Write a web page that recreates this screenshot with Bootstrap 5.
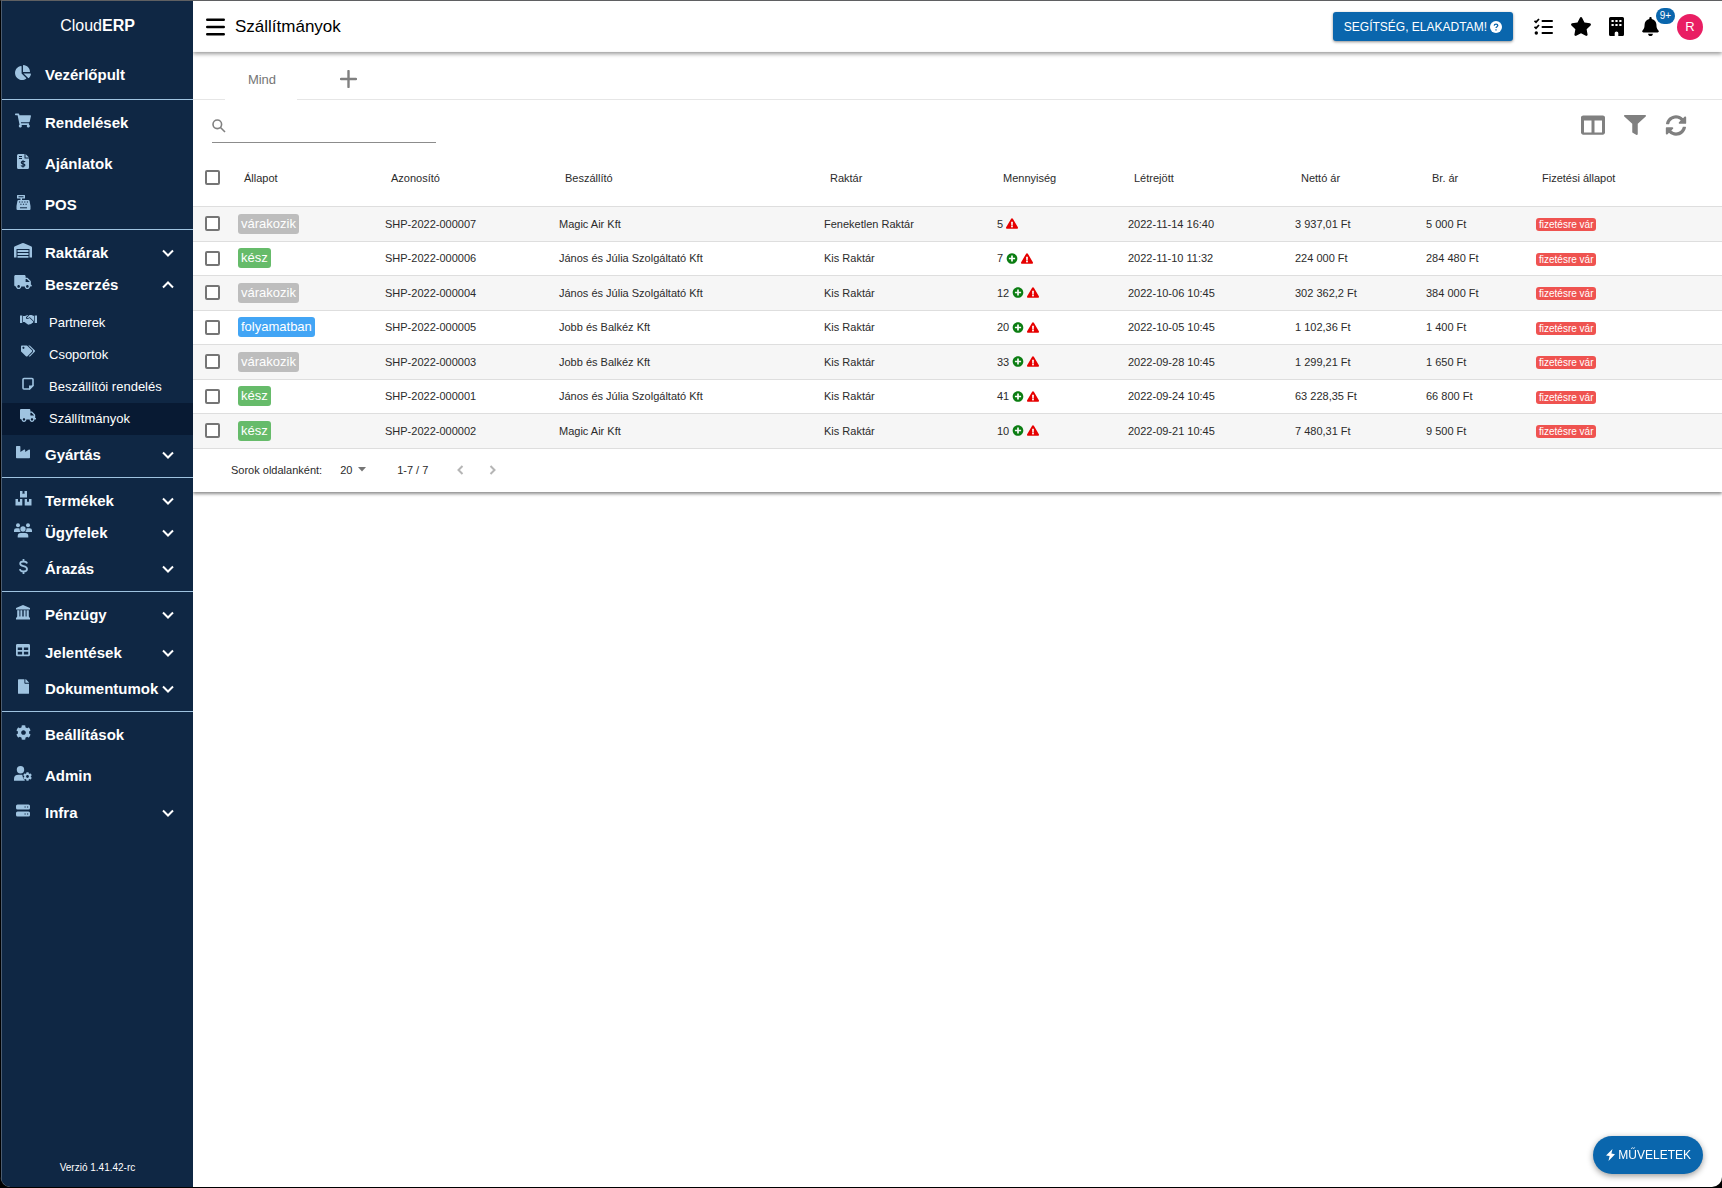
<!DOCTYPE html>
<html lang="hu">
<head>
<meta charset="utf-8">
<meta name="viewport" content="width=device-width, initial-scale=1">
<title>CloudERP – Szállítmányok</title>
<link href="https://cdn.jsdelivr.net/npm/bootstrap@5.3.0/dist/css/bootstrap.min.css" rel="stylesheet">
<style>
  :root { --navy:#0f2744; --navy-active:#081a33; --ice:#9fc3e0; --brand:#0a66ad; --ink:#2b2b2b; }
  html { background:#000; }
  body { font-family:"Liberation Sans", Arial, sans-serif; font-size:11px; line-height:16px; color:var(--ink); background:transparent; }
  svg { fill:currentColor; flex:none; display:block; }
  .app-shell { min-height:calc(100vh - 1px); border-top:1px solid #5f6062; border-left:1px solid #000; border-radius:0 0 10px 10px; background:#fff; overflow:hidden; }

  /* sidebar */
  .side-nav { width:192px; flex:none; background:var(--navy); color:#fff; border-left:1px solid #4b5c70; }
  .brand-name { height:54px; padding-top:15px; font-size:16px; line-height:20px; color:#fff; text-align:center; text-decoration:none; }
  .side-item { display:flex; align-items:center; width:100%; height:41px; padding:0 19px 2px 9px; border:0; background:none; color:#fff; font-size:15px; line-height:20px; font-weight:700; text-align:left; text-decoration:none; white-space:nowrap; }
  .side-item.group { height:32px; padding-bottom:0; }
  .side-icon { width:24px; height:20px; margin-right:10px; flex:none; color:var(--ice); display:flex; justify-content:center; }
  .side-item .chev { width:12px; height:8px; margin-left:auto; fill:none; stroke:#fff; stroke-width:2; }
  .side-groups { padding:4px 0 3px; }
  .side-line { margin:3px 0; border:0; height:1px; background:var(--ice); opacity:1; }
  .side-sub { margin:6px 0 4px; }
  .side-sub .side-item { height:32px; padding:0 0 0 14px; font-size:13px; font-weight:400; }
  .side-sub .side-icon { margin-right:9px; }
  .side-sub .active { background:var(--navy-active); }
  .side-gap { margin-top:6px; margin-bottom:4px; }
  .app-version { font-size:10px; padding-bottom:11px; }

  /* top bar */
  .top-bar { height:51px; padding:0 19px 0 13px; box-shadow:0 2px 4px rgba(0,0,0,.4); z-index:2; color:#000; }
  .top-bar h1 { font-size:17px; line-height:20px; font-weight:400; margin:0 0 0 10px; }
  .top-tools { gap:18px; }
  .top-tools .help-btn { margin-right:3px; }
  .icon-btn { border:0; padding:0; background:none; color:inherit; display:flex; align-items:center; justify-content:center; }
  .btn-brand { background:var(--brand); color:#fff; border:0; font-size:12px; line-height:16px; box-shadow:0 1px 3px rgba(0,0,0,.45); display:flex; align-items:center; white-space:nowrap; }
  .btn-brand:hover { background:#08548f; color:#fff; }
  .help-btn { height:29px; padding:0 11px; gap:3px; border-radius:3px; }
  .bell-badge { position:absolute; left:14px; top:-9px; min-width:19px; height:16px; border-radius:8px; background:var(--brand); color:#fff; font-size:10px; line-height:16px; text-align:center; }
  .user-dot { width:26px; height:26px; border-radius:50%; background:#e91e63; color:#fff; font-size:13px; }

  /* list */
  .list-panel { box-shadow:0 2px 3px rgba(0,0,0,.45); background:#fff; }
  .view-tabs { height:48px; }
  .view-tabs .filler { border-bottom:1px solid #e6e6e6; }
  .view-tab { width:72px; border:0; background:none; color:#757575; font-size:13px; padding:7px 0 0 2px; }
  .add-tab { width:102px; padding-top:7px; color:#808080; }
  .tool-row { height:50px; padding:0 35px 0 19px; color:#808080; }
  .search-field { width:224px; height:34px; margin-top:9px; border-bottom:1px solid #8c8c8c; }
  .search-field input { border:0; outline:0; background:none; width:100%; font-size:13px; }
  .tool-icons { gap:19px; }

  .ship-table { table-layout:fixed; min-width:1320px; margin:0; width:100%; color:var(--ink); border-collapse:collapse; }
  .ship-table th { height:56px; padding:0 0 0 14px; font-weight:400; white-space:nowrap; vertical-align:middle; }
  .ship-table td { padding:0 0 0 8px; vertical-align:middle; white-space:nowrap; }
  .ship-table tr { border-bottom:1px solid #dedede; }
  .ship-table tbody tr { height:34px; }
  .ship-table tbody tr:nth-child(odd) { height:35px; background:#f6f6f6; }
  .ship-table th:first-child, .ship-table td:first-child { padding-left:12px; }
  .tick { appearance:none; display:block; width:15px; height:15px; margin:0; border:2px solid #757575; border-radius:2px; background:#fff; }
  .tick:checked { background:#757575; }
  .state { display:inline-block; height:20px; padding:0 3px; border-radius:3px; font-size:13px; line-height:19px; color:#fff; vertical-align:middle; }
  .state-wait { background:#bdbdbd; } .state-done { background:#66bb6a; } .state-run { background:#42a5f5; }
  .pay { display:block; width:fit-content; height:13px; margin-top:2px; padding:0 3px; border-radius:3px; background:#ef5350; color:#fff; font-size:10px; line-height:13px; }
  .qty { display:flex; align-items:center; gap:3px; }
  .qty .received { color:#0b7d12; }
  .qty .warning { color:#e60000; }
  .w-tick { width:37px; } .w-state { width:147px; } .w-id { width:174px; } .w-sup { width:265px; } .w-store { width:173px; }
  .w-qty { width:131px; } .w-date { width:167px; } .w-net { width:131px; } .w-gross { width:110px; }

  .pager { height:43px; padding-left:38px; }
  .page-size { position:relative; margin-left:18px; width:57px; }
  .page-size select { appearance:none; border:0; background:none; padding:0 14px 0 0; color:inherit; font-size:11px; line-height:16px; width:32px; display:block; }
  .page-size svg { position:absolute; left:18px; top:5px; color:#757575; pointer-events:none; }
  .pager .icon-btn { width:32px; color:#b5b5b5; }
  .pager .icon-btn svg { fill:none; stroke:currentColor; stroke-width:2; }

  .action-btn { position:fixed; right:19px; bottom:14px; height:38px; padding:0 12px 0 13px; gap:3px; border-radius:19px; box-shadow:0 2px 6px rgba(0,0,0,.4); }
</style>
<script src="https://cdn.jsdelivr.net/npm/bootstrap@5.3.0/dist/js/bootstrap.bundle.min.js"></script>
</head>
<body>
<svg class="d-none" aria-hidden="true">
  <symbol id="chev-down" viewBox="0 0 12 8"><path d="M1 1.500 6 6.500 11 1.500"/></symbol>
  <symbol id="chev-up" viewBox="0 0 12 8"><path d="M1 6.500 6 1.500 11 6.500"/></symbol>
  <symbol id="truck" viewBox="0 0 640 512"><path d="M624 352h-16V243.900c0-12.700-5.100-24.900-14.100-33.900L494 110.100c-9-9-21.200-14.100-33.900-14.100H416V48c0-26.500-21.500-48-48-48H48C21.500 0 0 21.500 0 48v320c0 26.500 21.500 48 48 48h16c0 53 43 96 96 96s96-43 96-96h128c0 53 43 96 96 96s96-43 96-96h48c8.800 0 16-7.200 16-16v-32c0-8.800-7.200-16-16-16zM160 464c-26.500 0-48-21.500-48-48s21.500-48 48-48 48 21.500 48 48-21.500 48-48 48zm320 0c-26.500 0-48-21.500-48-48s21.500-48 48-48 48 21.500 48 48-21.500 48-48 48zm80-208H416V144h44.100l99.900 99.900V256z"/></symbol>
  <symbol id="warn" viewBox="0 0 576 512"><path d="M569.517 440.013C587.975 472.007 564.806 512 527.940 512H48.054c-36.937 0-59.999-40.055-41.577-71.987L246.423 23.985c18.467-32.009 64.720-31.951 83.154 0l239.940 416.028zM288 354c-25.405 0-46 20.595-46 46s20.595 46 46 46 46-20.595 46-46-20.595-46-46-46zm-43.673-165.346l7.418 136c.347 6.364 5.609 11.346 11.982 11.346h48.546c6.373 0 11.635-4.982 11.982-11.346l7.418-136c.375-6.874-5.098-12.654-11.982-12.654h-63.383c-6.884 0-12.356 5.780-11.981 12.654z"/></symbol>
  <symbol id="plus-circle" viewBox="0 0 512 512"><path d="M256 8C119 8 8 119 8 256s111 248 248 248 248-111 248-248S393 8 256 8zm144 276c0 6.600-5.400 12-12 12h-92v92c0 6.600-5.400 12-12 12h-56c-6.600 0-12-5.400-12-12v-92h-92c-6.600 0-12-5.400-12-12v-56c0-6.600 5.400-12 12-12h92v-92c0-6.600 5.400-12 12-12h56c6.600 0 12 5.400 12 12v92h92c6.600 0 12 5.400 12 12v56z"/></symbol>
  <symbol id="cog" viewBox="0 0 512 512"><path d="M487.400 315.700l-42.600-24.600c4.300-23.200 4.300-47 0-70.200l42.600-24.600c4.900-2.800 7.100-8.600 5.500-14-11.100-35.600-30-67.800-54.700-94.600-3.800-4.100-10-5.100-14.800-2.300L380.800 110c-17.900-15.400-38.500-27.300-60.800-35.100V25.800c0-5.600-3.900-10.500-9.400-11.700-36.700-8.200-74.300-7.800-109.200 0-5.500 1.200-9.400 6.100-9.400 11.700V75c-22.200 7.900-42.800 19.800-60.800 35.100L88.700 85.500c-4.900-2.800-11-1.900-14.800 2.300-24.700 26.700-43.600 58.900-54.700 94.600-1.700 5.400.6 11.200 5.500 14L67.300 221c-4.300 23.200-4.300 47 0 70.200l-42.600 24.600c-4.900 2.800-7.100 8.600-5.500 14 11.100 35.600 30 67.800 54.700 94.600 3.800 4.100 10 5.100 14.800 2.300l42.600-24.600c17.900 15.400 38.500 27.300 60.800 35.100v49.200c0 5.600 3.900 10.500 9.400 11.700 36.700 8.200 74.300 7.800 109.200 0 5.500-1.200 9.400-6.100 9.400-11.700v-49.200c22.200-7.900 42.800-19.800 60.800-35.100l42.600 24.600c4.900 2.800 11 1.900 14.800-2.300 24.700-26.700 43.600-58.900 54.700-94.600 1.500-5.500-.7-11.300-5.600-14.100zM256 336c-44.100 0-80-35.900-80-80s35.900-80 80-80 80 35.900 80 80-35.900 80-80 80z"/></symbol>
</svg>

<div class="app-shell d-flex">
  <nav class="side-nav d-flex flex-column" aria-label="Főmenü">
    <a class="brand-name d-block" href="#">Cloud<b>ERP</b></a>
    <a class="side-item" href="#"><span class="side-icon"><svg width="16" height="15" viewBox="0 0 544 512"><path d="M527.790 288H290.500l158.030 158.030c6.040 6.040 15.980 6.530 22.190.68 38.700-36.460 65.320-85.610 73.130-140.860 1.340-9.460-6.510-17.850-16.060-17.850zm-15.830-64.800C503.720 103.740 408.260 8.280 288.800.04 279.680-.59 272 7.100 272 16.240V240h223.770c9.140 0 16.820-7.680 16.190-16.800zM224 288V50.710c0-9.550-8.390-17.400-17.840-16.060C86.990 51.490-4.100 155.600.14 280.370 4.500 408.510 114.830 513.590 243.030 511.980c50.400-.63 96.970-16.870 135.260-44.030 7.900-5.600 8.420-17.230 1.570-24.080L224 288z"/></svg></span>Vezérlőpult</a>
    <hr class="side-line">
    <a class="side-item" href="#"><span class="side-icon"><svg width="16" height="15" viewBox="0 0 576 512"><path d="M528.120 301.319l47.273-208C578.806 78.301 567.391 64 551.990 64H159.208l-9.166-44.810C147.758 8.021 137.930 0 126.529 0H24C10.745 0 0 10.745 0 24v16c0 13.255 10.745 24 24 24h69.883l70.248 343.435C147.325 417.100 136 435.222 136 456c0 30.928 25.072 56 56 56s56-25.072 56-56c0-15.674-6.447-29.835-16.824-40h209.647C430.447 426.165 424 440.326 424 456c0 30.928 25.072 56 56 56s56-25.072 56-56c0-22.172-12.888-41.332-31.579-50.405l5.517-24.276c3.413-15.018-8.002-29.319-23.403-29.319H218.117l-6.545-32h293.145c11.206 0 20.920-7.754 23.403-18.681z"/></svg></span>Rendelések</a>
    <a class="side-item" href="#"><span class="side-icon"><svg width="12" height="15" viewBox="0 0 12 15"><path fill-rule="evenodd" d="M1.500 0H7.500V4.500H12V13.500Q12 15 10.500 15H1.500Q0 15 0 13.500V1.500Q0 0 1.500 0ZM2 2V3H5V2ZM2 4V5H5V4Z"/><path d="M8.500 0 12 3.500H8.500Z"/><path d="M8 8C7.500 7 4.300 7.100 4.300 8.700 4.300 10.400 7.900 9.400 7.900 11.100 7.900 12.600 4.700 12.700 4 11.500M6 6.300V13.600" fill="none" stroke="#0f2744" stroke-width="1.200"/></svg></span>Ajánlatok</a>
    <a class="side-item" href="#"><span class="side-icon"><svg width="15" height="15" viewBox="0 0 15 15"><path fill-rule="evenodd" d="M1.500 0H8.500Q9 0 9 .5V3Q9 3.500 8.500 3.500H6V5H12.500Q13.400 5 13.600 6L14.500 11H.5L1.400 6Q1.600 5 2.500 5H4.500V3.500H1.500Q1 3.500 1 3V.5Q1 0 1.500 0ZM2.500 1.300V2.200H7.500V1.300ZM3 6.500V7.500H4.200V6.500ZM5.600 6.500V7.500H6.800V6.500ZM8.200 6.500V7.500H9.400V6.500ZM10.800 6.500V7.500H12V6.500ZM4.300 8.700V9.700H5.500V8.700ZM6.900 8.700V9.700H8.100V8.700ZM9.500 8.700V9.700H10.700V8.700Z"/><path d="M.5 11H14.500V14Q14.500 15 13.500 15H1.500Q.5 15 .5 14Z"/><path d="M4 12.800H11" stroke="#0f2744"/></svg></span>POS</a>
    <hr class="side-line">
    <div class="side-groups">
      <button class="side-item group" type="button" aria-expanded="false"><span class="side-icon"><svg width="18" height="15" viewBox="0 0 18 15"><path fill-rule="evenodd" d="M9 0Q9.500 0 10 .2L17 3.200Q18 3.700 18 4.600V14.500H15.500V6H2.500V14.500H0V4.600Q0 3.700 1 3.200L8 .2Q8.500 0 9 0Z"/><path d="M3.500 7H14.500V9H3.500ZM3.500 10H14.500V12H3.500ZM3.500 13H14.500V14.700H3.500Z"/></svg></span>Raktárak<svg class="chev"><use href="#chev-down"/></svg></button>
      <button class="side-item group" type="button" aria-expanded="true"><span class="side-icon"><svg width="18" height="14"><use href="#truck"/></svg></span>Beszerzés<svg class="chev"><use href="#chev-up"/></svg></button>
      <div class="side-sub">
        <a class="side-item" href="#"><span class="side-icon"><svg width="17" height="14" viewBox="0 0 17 14"><path d="M0 2.500H2.300V10H0ZM14.700 2.500H17V10H14.700ZM3 3H5L7.500 2H8.300L6 4.300Q5.500 6.500 7.800 6L9.500 5 13.300 8.500Q13.500 10 12 10 11.500 11.500 10 11 9 12.300 7.500 11.300L4.500 9H3ZM9.500 2H11.500L14 3V8.300L9.800 4.200 7.500 5.200Q6.600 5.200 7 4.500Z"/></svg></span>Partnerek</a>
        <a class="side-item" href="#"><span class="side-icon"><svg width="14" height="12" viewBox="0 0 640 512"><path d="M497.941 225.941L286.059 14.059A48 48 0 0 0 252.118 0H48C21.490 0 0 21.490 0 48v204.118a48 48 0 0 0 14.059 33.941l211.882 211.882c18.744 18.745 49.136 18.746 67.882 0l204.118-204.118c18.745-18.745 18.745-49.137 0-67.882zM112 160c-26.510 0-48-21.490-48-48s21.490-48 48-48 48 21.490 48 48-21.490 48-48 48zm513.941 133.823L421.823 497.941c-18.745 18.745-49.137 18.745-67.882 0l-.36-.36L527.640 323.522c16.999-16.999 26.360-39.600 26.360-63.640s-9.362-46.641-26.360-63.640L331.397 0h48.721a48 48 0 0 1 33.941 14.059l211.882 211.882c18.745 18.745 18.745 49.137 0 67.882z"/></svg></span>Csoportok</a>
        <a class="side-item" href="#"><span class="side-icon"><svg width="12" height="13" viewBox="0 0 12 13"><path d="M2 1.500H10Q11 1.500 11 2.500V8.500L7.500 12H2Q1 12 1 11V2.500Q1 1.500 2 1.500Z" fill="none" stroke="currentColor" stroke-width="1.600"/><path d="M7 12.500V8.500H11.500V9L8 12.500Z"/></svg></span>Beszállítói rendelés</a>
        <a class="side-item active" href="#" aria-current="page"><span class="side-icon"><svg width="16" height="13"><use href="#truck"/></svg></span>Szállítmányok</a>
      </div>
      <button class="side-item group" type="button" aria-expanded="false"><span class="side-icon"><svg width="14" height="14" viewBox="0 0 512 512"><path d="M475.115 163.781L336 252.309v-68.280c0-18.916-20.931-30.399-36.885-20.248L160 252.309V56c0-13.255-10.745-24-24-24H24C10.745 32 0 42.745 0 56v400c0 13.255 10.745 24 24 24h464c13.255 0 24-10.745 24-24V184.029c0-18.917-20.931-30.399-36.885-20.248z"/></svg></span>Gyártás<svg class="chev"><use href="#chev-down"/></svg></button>
    </div>
    <hr class="side-line">
    <div class="side-groups">
      <button class="side-item group" type="button" aria-expanded="false"><span class="side-icon"><svg width="17" height="15" viewBox="0 0 17 15"><path d="M5 0H7.500V3L8.500 2.400 9.500 3V0H12V6.500H5ZM.5 8H3V11L4 10.400 5 11V8H7.300V14.500H.5ZM9.700 8H12V11L13 10.400 14 11V8H16.500V14.500H9.700Z"/></svg></span>Termékek<svg class="chev"><use href="#chev-down"/></svg></button>
      <button class="side-item group" type="button" aria-expanded="false"><span class="side-icon"><svg width="18" height="15" viewBox="0 0 18 15"><circle cx="4" cy="2.300" r="2"/><circle cx="14" cy="2.300" r="2"/><circle cx="9" cy="6" r="2.700"/><path d="M0 9V7.500Q0 5.200 2.300 5.200H4.500Q5.400 5.200 5.600 5.600 5.300 7.600 6.700 9ZM18 9V7.500Q18 5.200 15.700 5.200H13.500Q12.600 5.200 12.400 5.600 12.700 7.600 11.300 9ZM3.700 14.500V13Q3.700 10 6.700 10H11.300Q14.300 10 14.300 13V14.500Z"/></svg></span>Ügyfelek<svg class="chev"><use href="#chev-down"/></svg></button>
      <button class="side-item group mt-1" type="button" aria-expanded="false"><span class="side-icon"><svg width="9" height="15" viewBox="0 0 9 15"><path d="M8 4.500C7.700 2.900 6.300 2.500 4.500 2.500 2.500 2.500 1.200 3.300 1.200 4.800 1.200 8.200 8 6.200 8 10 8 11.700 6.500 12.500 4.500 12.500 2.500 12.500 1.100 11.800.9 10.200M4.500 0V2.500M4.500 12.500V15" fill="none" stroke="currentColor" stroke-width="1.800"/></svg></span>Árazás<svg class="chev"><use href="#chev-down"/></svg></button>
    </div>
    <hr class="side-line">
    <div class="side-groups">
      <button class="side-item group" type="button" aria-expanded="false"><span class="side-icon"><svg width="14" height="15" viewBox="0 0 14 15"><path d="M7 0 14 3V4.500H0V3ZM1.200 5.300H3.400V11.500H1.200ZM4.400 5.300H6.300V11.500H4.400ZM7.700 5.300H9.600V11.500H7.700ZM10.600 5.300H12.800V11.500H10.600ZM1 11.500H13V12.500H14V14.500H0V12.500H1Z"/></svg></span>Pénzügy<svg class="chev"><use href="#chev-down"/></svg></button>
      <button class="side-item group side-gap" type="button" aria-expanded="false"><span class="side-icon"><svg width="14" height="14" viewBox="0 0 512 512"><path d="M464 32H48C21.490 32 0 53.490 0 80v352c0 26.510 21.490 48 48 48h416c26.510 0 48-21.490 48-48V80c0-26.510-21.490-48-48-48zM224 416H64v-96h160v96zm0-160H64v-96h160v96zm224 160H288v-96h160v96zm0-160H288v-96h160v96z"/></svg></span>Jelentések<svg class="chev"><use href="#chev-down"/></svg></button>
      <button class="side-item group" type="button" aria-expanded="false"><span class="side-icon"><svg width="11" height="15" viewBox="0 0 384 512"><path d="M224 136V0H24C10.700 0 0 10.700 0 24v464c0 13.300 10.700 24 24 24h336c13.300 0 24-10.700 24-24V160H248c-13.200 0-24-10.800-24-24zm160-14.100v6.100H256V0h6.100c6.400 0 12.500 2.500 17 7l97.900 98c4.500 4.500 7 10.600 7 16.900z"/></svg></span>Dokumentumok<svg class="chev"><use href="#chev-down"/></svg></button>
    </div>
    <hr class="side-line">
    <a class="side-item" href="#"><span class="side-icon"><svg width="15" height="15"><use href="#cog"/></svg></span>Beállítások</a>
    <a class="side-item" href="#"><span class="side-icon"><svg width="18" height="15" viewBox="0 0 18 15"><circle cx="6.500" cy="3.700" r="3.700"/><path d="M0 14.800V13Q0 8.800 4.500 8.800H8.300Q8.500 12.800 11 14.800Z"/><svg x="9" y="6" width="9" height="9"><use href="#cog"/></svg></svg></span>Admin</a>
    <button class="side-item group" type="button" aria-expanded="false"><span class="side-icon"><svg width="14" height="15" viewBox="0 0 14 15"><path fill-rule="evenodd" d="M1.500 1.500H12.500Q14 1.500 14 3V5Q14 6.500 12.500 6.500H1.500Q0 6.500 0 5V3Q0 1.500 1.500 1.500ZM8.500 3.400V4.600H9.700V3.400ZM11 3.400V4.600H12.200V3.400ZM1.500 8.500H12.500Q14 8.500 14 10V12Q14 13.500 12.500 13.500H1.500Q0 13.500 0 12V10Q0 8.500 1.500 8.500ZM8.500 10.400V11.600H9.700V10.400ZM11 10.400V11.600H12.200V10.400Z"/></svg></span>Infra<svg class="chev"><use href="#chev-down"/></svg></button>
    <div class="app-version mt-auto text-center">Verzió 1.41.42-rc</div>
  </nav>

  <div class="flex-grow-1 d-flex flex-column overflow-hidden">
    <header class="top-bar d-flex align-items-center position-relative">
      <button class="icon-btn" type="button" aria-label="Menü"><svg width="19" height="18" viewBox="0 0 19 18"><path d="M1.200 1.700H17.800M1.200 9H17.800M1.200 16.300H17.800" stroke="currentColor" stroke-width="2.400" stroke-linecap="round"/></svg></button>
      <h1>Szállítmányok</h1>
      <div class="top-tools d-flex align-items-center ms-auto">
        <button class="btn btn-brand help-btn" type="button">SEGÍTSÉG, ELAKADTAM!<svg width="12" height="12" viewBox="0 0 12 12"><circle cx="6" cy="6" r="6"/><path d="M4.200 4.600C4.300 2.700 7.800 2.700 7.800 4.600 7.800 5.700 6 5.800 6 7.100M6 8.200V9.400" fill="none" stroke="#0a66ad" stroke-width="1.300"/></svg></button>
        <button class="icon-btn" type="button" aria-label="Teendők"><svg width="19" height="18" viewBox="0 0 19 18"><g fill="none" stroke="currentColor"><path d="M8.500 3H18M8.500 9H18M8.500 15H18" stroke-width="2" stroke-linecap="round"/><path d="M.5 2.800 2 4.200 5 1M.5 8.800 2 10.200 5 7" stroke-width="1.700"/></g><circle cx="2.300" cy="15" r="1.700"/></svg></button>
        <button class="icon-btn" type="button" aria-label="Kedvencek"><svg width="20" height="19" viewBox="18 0 540 512"><path d="M259.300 17.800L194 150.200 47.900 171.500c-26.200 3.800-36.700 36.100-17.700 54.600l105.700 103-25 145.500c-4.500 26.300 23.200 46 46.400 33.700L288 439.600l130.700 68.700c23.200 12.200 50.900-7.400 46.400-33.700l-25-145.500 105.700-103c19-18.500 8.500-50.800-17.700-54.600L382 150.200 316.700 17.800c-11.700-23.600-45.600-23.900-57.400 0z"/></svg></button>
        <button class="icon-btn" type="button" aria-label="Cég"><svg width="15" height="19" viewBox="0 0 15 19"><path fill-rule="evenodd" d="M1.500 0H13.500Q15 0 15 1.500V17.500Q15 19 13.500 19H9.300V16Q9.300 14.400 7.500 14.400 5.700 14.400 5.700 16V19H1.500Q0 19 0 17.500V1.500Q0 0 1.500 0ZM2.500 3V5H4.700V3ZM6.400 3V5H8.600V3ZM10.300 3V5H12.500V3ZM2.500 7V9H4.700V7ZM6.400 7V9H8.600V7ZM10.300 7V9H12.500V7Z"/></svg></button>
        <button class="icon-btn position-relative" type="button" aria-label="Értesítések"><svg width="17" height="19" viewBox="0 0 448 512"><path d="M224 512c35.320 0 63.970-28.650 63.970-64H160.030c0 35.350 28.650 64 63.970 64zm215.390-149.710c-19.320-20.760-55.470-51.990-55.470-154.290 0-77.700-54.480-139.900-127.940-155.160V32c0-17.670-14.320-32-31.980-32s-31.980 14.330-31.980 32v20.840C118.560 68.100 64.080 130.300 64.080 208c0 102.300-36.150 133.530-55.470 154.290-6 6.450-8.660 14.160-8.610 21.710.11 16.400 12.980 32 32.100 32h383.800c19.120 0 32-15.600 32.100-32 .05-7.550-2.610-15.270-8.610-21.710z"/></svg><span class="bell-badge">9+</span></button>
        <button class="icon-btn user-dot" type="button" aria-label="Profil">R</button>
      </div>
    </header>

    <main>
      <section class="list-panel">
        <div class="view-tabs d-flex">
          <div class="filler ps-3 pe-3"></div>
          <button class="view-tab" type="button">Mind</button>
          <div class="filler flex-grow-1 d-flex">
            <button class="icon-btn add-tab" type="button" aria-label="Új nézet"><svg width="17" height="18" viewBox="0 0 17 18"><path d="M8.500 1V17M1 9H16" stroke="currentColor" stroke-width="2.400" stroke-linecap="round"/></svg></button>
          </div>
        </div>
        <div class="tool-row d-flex">
          <label class="search-field d-flex align-items-center gap-2"><svg width="14" height="14" viewBox="0 0 14 14"><g fill="none" stroke="currentColor" stroke-width="1.600"><circle cx="5.300" cy="5.300" r="4.300"/><path d="M8.500 8.500 13 13"/></g></svg><input type="search" aria-label="Keresés"></label>
          <div class="tool-icons d-flex align-items-center ms-auto">
            <button class="icon-btn" type="button" aria-label="Oszlopok"><svg width="24" height="22" viewBox="0 0 512 512" preserveAspectRatio="none"><path d="M464 32H48C21.490 32 0 53.490 0 80v352c0 26.510 21.490 48 48 48h416c26.510 0 48-21.490 48-48V80c0-26.510-21.490-48-48-48zM224 432H64V152h160v280zm224 0H288V152h160v280z"/></svg></button>
            <button class="icon-btn" type="button" aria-label="Szűrő"><svg width="22" height="20" viewBox="0 0 512 512" preserveAspectRatio="none"><path d="M487.976 0H24.028C2.710 0-8.047 25.866 7.058 40.971L192 225.941V432c0 7.831 3.821 15.170 10.237 19.662l80 55.980C298.020 518.690 320 507.493 320 487.980V225.941l184.947-184.970C520.021 25.896 509.338 0 487.976 0z"/></svg></button>
            <button class="icon-btn" type="button" aria-label="Frissítés"><svg width="22" height="21" viewBox="0 0 512 512"><path d="M370.720 133.280C339.458 104.008 298.888 87.962 255.848 88c-77.458.068-144.328 53.178-162.791 126.850-1.344 5.363-6.122 9.150-11.651 9.150H24.103c-7.498 0-13.194-6.807-11.807-14.176C33.933 94.924 134.813 8 256 8c66.448 0 126.791 26.136 171.315 68.685L463.030 40.970C478.149 25.851 504 36.559 504 57.941V192c0 13.255-10.745 24-24 24H345.941c-21.382 0-32.090-25.851-16.971-40.971l41.750-41.749zM32 296h134.059c21.382 0 32.090 25.851 16.971 40.971l-41.750 41.750c31.262 29.273 71.835 45.319 114.876 45.280 77.418-.070 144.315-53.144 162.787-126.849 1.344-5.363 6.122-9.150 11.651-9.150h57.304c7.498 0 13.194 6.807 11.807 14.176C478.067 417.076 377.187 504 256 504c-66.448 0-126.791-26.136-171.315-68.685L48.970 471.030C33.851 486.149 8 475.441 8 454.059V320c0-13.255 10.745-24 24-24z"/></svg></button>
          </div>
        </div>
        <div class="table-responsive">
          <table class="ship-table">
            <colgroup><col class="w-tick"><col class="w-state"><col class="w-id"><col class="w-sup"><col class="w-store"><col class="w-qty"><col class="w-date"><col class="w-net"><col class="w-gross"><col></colgroup>
            <thead>
              <tr><th><input class="tick" type="checkbox" aria-label="Összes kijelölése"></th><th>Állapot</th><th>Azonosító</th><th>Beszállító</th><th>Raktár</th><th>Mennyiség</th><th>Létrejött</th><th>Nettó ár</th><th>Br. ár</th><th>Fizetési állapot</th></tr>
            </thead>
            <tbody>
              <tr><td><input class="tick" type="checkbox" aria-label="SHP-2022-000007"></td><td><span class="state state-wait">várakozik</span></td><td>SHP-2022-000007</td><td>Magic Air Kft</td><td>Feneketlen Raktár</td><td><span class="qty">5<svg class="warning" width="12" height="11"><use href="#warn"/></svg></span></td><td>2022-11-14 16:40</td><td>3 937,01 Ft</td><td>5 000 Ft</td><td><span class="pay">fizetésre vár</span></td></tr>
              <tr><td><input class="tick" type="checkbox" aria-label="SHP-2022-000006"></td><td><span class="state state-done">kész</span></td><td>SHP-2022-000006</td><td>János és Júlia Szolgáltató Kft</td><td>Kis Raktár</td><td><span class="qty">7<svg class="received" width="12" height="11"><use href="#plus-circle"/></svg><svg class="warning" width="12" height="11"><use href="#warn"/></svg></span></td><td>2022-11-10 11:32</td><td>224 000 Ft</td><td>284 480 Ft</td><td><span class="pay">fizetésre vár</span></td></tr>
              <tr><td><input class="tick" type="checkbox" aria-label="SHP-2022-000004"></td><td><span class="state state-wait">várakozik</span></td><td>SHP-2022-000004</td><td>János és Júlia Szolgáltató Kft</td><td>Kis Raktár</td><td><span class="qty">12<svg class="received" width="12" height="11"><use href="#plus-circle"/></svg><svg class="warning" width="12" height="11"><use href="#warn"/></svg></span></td><td>2022-10-06 10:45</td><td>302 362,2 Ft</td><td>384 000 Ft</td><td><span class="pay">fizetésre vár</span></td></tr>
              <tr><td><input class="tick" type="checkbox" aria-label="SHP-2022-000005"></td><td><span class="state state-run">folyamatban</span></td><td>SHP-2022-000005</td><td>Jobb és Balkéz Kft</td><td>Kis Raktár</td><td><span class="qty">20<svg class="received" width="12" height="11"><use href="#plus-circle"/></svg><svg class="warning" width="12" height="11"><use href="#warn"/></svg></span></td><td>2022-10-05 10:45</td><td>1 102,36 Ft</td><td>1 400 Ft</td><td><span class="pay">fizetésre vár</span></td></tr>
              <tr><td><input class="tick" type="checkbox" aria-label="SHP-2022-000003"></td><td><span class="state state-wait">várakozik</span></td><td>SHP-2022-000003</td><td>Jobb és Balkéz Kft</td><td>Kis Raktár</td><td><span class="qty">33<svg class="received" width="12" height="11"><use href="#plus-circle"/></svg><svg class="warning" width="12" height="11"><use href="#warn"/></svg></span></td><td>2022-09-28 10:45</td><td>1 299,21 Ft</td><td>1 650 Ft</td><td><span class="pay">fizetésre vár</span></td></tr>
              <tr><td><input class="tick" type="checkbox" aria-label="SHP-2022-000001"></td><td><span class="state state-done">kész</span></td><td>SHP-2022-000001</td><td>János és Júlia Szolgáltató Kft</td><td>Kis Raktár</td><td><span class="qty">41<svg class="received" width="12" height="11"><use href="#plus-circle"/></svg><svg class="warning" width="12" height="11"><use href="#warn"/></svg></span></td><td>2022-09-24 10:45</td><td>63 228,35 Ft</td><td>66 800 Ft</td><td><span class="pay">fizetésre vár</span></td></tr>
              <tr><td><input class="tick" type="checkbox" aria-label="SHP-2022-000002"></td><td><span class="state state-done">kész</span></td><td>SHP-2022-000002</td><td>Magic Air Kft</td><td>Kis Raktár</td><td><span class="qty">10<svg class="received" width="12" height="11"><use href="#plus-circle"/></svg><svg class="warning" width="12" height="11"><use href="#warn"/></svg></span></td><td>2022-09-21 10:45</td><td>7 480,31 Ft</td><td>9 500 Ft</td><td><span class="pay">fizetésre vár</span></td></tr>
            </tbody>
          </table>
        </div>
        <div class="pager d-flex align-items-center">
          <label for="page-size">Sorok oldalanként:</label>
          <div class="page-size"><select id="page-size"><option>20</option><option>50</option></select><svg width="8" height="5" viewBox="0 0 8 5"><path d="M0 0H8L4 4.500Z"/></svg></div>
          <span>1-7 / 7</span>
          <button class="icon-btn ms-3" type="button" aria-label="Előző oldal"><svg width="7" height="10" viewBox="0 0 7 10"><path d="M5.500 1 1.500 5 5.500 9"/></svg></button>
          <button class="icon-btn" type="button" aria-label="Következő oldal"><svg width="7" height="10" viewBox="0 0 7 10"><path d="M1.500 1 5.500 5 1.500 9"/></svg></button>
        </div>
      </section>
    </main>
  </div>
</div>
<button class="btn btn-brand action-btn" type="button"><svg width="9" height="12" viewBox="0 0 9 12"><path d="M6.500 0 0 6.500 3.600 7 2.500 12 9 5.200 5.400 4.600Z"/></svg>MŰVELETEK</button>
</body>
</html>
